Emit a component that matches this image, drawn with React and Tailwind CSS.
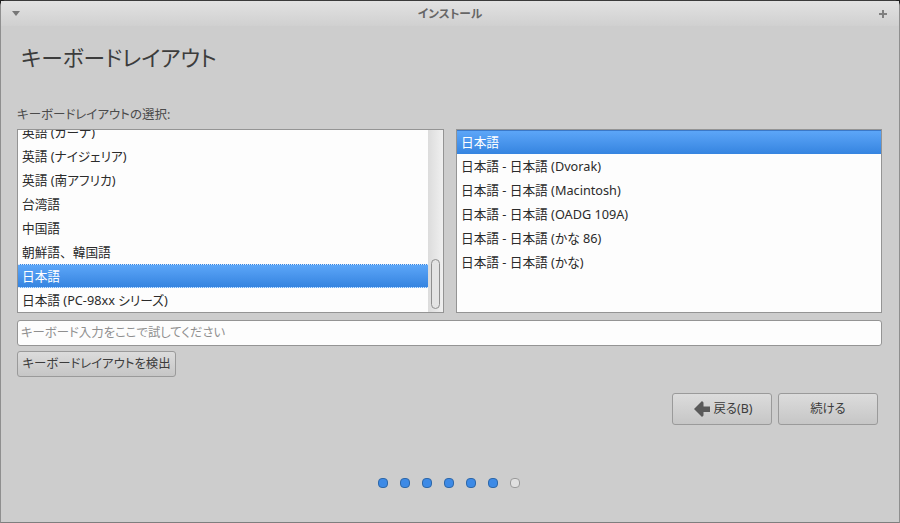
const left = ["英語 (ガーナ)", "英語 (ナイジェリア)", "英語 (南アフリカ)", "台湾語", "中国語", "朝鮮語、韓国語", "日本語", "日本語 (PC-98xx シリーズ)"];
const right = ["日本語", "日本語 - 日本語 (Dvorak)", "日本語 - 日本語 (Macintosh)", "日本語 - 日本語 (OADG 109A)", "日本語 - 日本語 (かな 86)", "日本語 - 日本語 (かな)"];
const font = { fontFamily: '"Noto Sans", "Noto Sans CJK JP", sans-serif' };

function Row({ text, selected, focus }) {
  const parts = text.split("、");
  return (
    <div
      className={
        "h-6 leading-6 pl-[4px] text-[12.7px] whitespace-nowrap " +
        (selected
          ? "bg-gradient-to-b from-[#5ca6f8] to-[#3584e0] text-white " + (focus ? "border-y border-dotted border-[#d8e8fa] leading-[22px]" : "border-t border-[#3a78c8] leading-[23px]")
          : "text-[#2b2b2b]")
      }
    >
      {parts.length > 1 ? (
        <>
          {parts[0]}
          <span className="[font-feature-settings:normal]">、</span>
          {parts[1]}
        </>
      ) : (
        text
      )}
    </div>
  );
}

function Btn({ className, children }) {
  return (
    <div className={"flex items-center justify-center rounded-[3px] border border-[#9a9a9a] bg-gradient-to-b from-[#dcdcdc] to-[#c6c6c6] text-[12.4px] text-[#3c3c3c] " + className}>
      {children}
    </div>
  );
}

export default function App() {
  return (
    <div style={font} className="w-[900px] h-[523px] bg-[#1f1f1f] overflow-hidden [font-feature-settings:'palt']">
      <div className="h-[523px] flex flex-col bg-[#cdcdcd] rounded-t-[6px] mt-0 border-t border-[#3a3a3a] border-l border-r border-b border-l-[#8f8f8f] border-r-[#8f8f8f] border-b-[#7e7e7e]">
        <div className="h-[25px] shrink-0 flex items-center justify-between pl-[10px] pr-[12px] bg-gradient-to-b from-[#e2e2e2] to-[#d0d0d0] relative">
          <svg width="10" height="6" viewBox="0 0 10 6"><path d="M1 0h8L5 5z" fill="#777" /></svg>
          <span className="text-[11.7px] font-bold text-[#666] leading-none">インストール</span>
          <svg width="8" height="8" viewBox="0 0 8 8"><path d="M3 0h2v3h3v2H5v3H3V5H0V3h3z" fill="#808080" /></svg>
        </div>
        <div className="flex-1 flex flex-col pl-[16px] pr-[17px] min-h-0">
          <h1 className="text-[21.7px] font-normal text-[#3c3c3c] leading-[28px] pl-[4px] mt-[18px]">キーボードレイアウト</h1>
          <div className="text-[12.5px] text-[#4a4a4a] leading-4 mt-[35px]">キーボードレイアウトの選択:</div>
          <div className="flex gap-3 mt-[6px] h-[184px] shrink-0">
            <div className="w-[427px] border border-[#949494] bg-[#fdfdfd] flex overflow-hidden">
              <div className="flex-1 overflow-hidden">
                <div className="-mt-[10px]">
                  {left.map((t) => <Row key={t} text={t} selected={t === "日本語"} focus />)}
                </div>
              </div>
              <div className="w-[15px] shrink-0 bg-gradient-to-r from-[#dcdcdc] to-[#f0f0f0] flex items-end justify-center pb-[3px]">
                <div className="w-[9px] h-[50px] rounded-[5px] border border-[#8f8f8f] bg-[#e4e4e4]" />
              </div>
            </div>
            <div className="flex-1 border border-[#949494] bg-[#fdfdfd] overflow-hidden">
              {right.map((t, i) => <Row key={t} text={t} selected={i === 0} />)}
            </div>
          </div>
          <div className="h-[26px] mt-[7px] shrink-0 rounded-[3px] border border-[#949494] bg-[#fdfdfd] pl-[3px] text-[12.4px] leading-[24px] text-[#8f8f8f]">キーボード入力をここで試してください</div>
          <Btn className="w-[159px] h-[26px] mt-[5px]">キーボードレイアウトを検出</Btn>
          <div className="flex justify-end gap-[6px] mt-[16px] pr-[4px]">
            <Btn className="w-[100px] h-[32px] gap-[4px] pl-[2px]">
              <svg width="16" height="16" viewBox="0 0 16 16"><path d="M8 0 0 8l8 8 1.5-1.5V11H16V5.5H9.5V1.5z" fill="#5a5a5a" /></svg>
              <span>戻る(B)</span>
            </Btn>
            <Btn className="w-[100px] h-[32px]">続ける</Btn>
          </div>
          <div className="flex justify-center gap-3 mt-[53px] pr-[1px]">
            {[0, 1, 2, 3, 4, 5, 6].map((i) => (
              <div key={i} className={"w-[10px] h-[10px] rounded-[4px] border " + (i < 6 ? "border-[#2f68a8] bg-[#3d8ae6]" : "border-[#9a9a9a] bg-[#e0e0e0]")} />
            ))}
          </div>
        </div>
      </div>
    </div>
  );
}
